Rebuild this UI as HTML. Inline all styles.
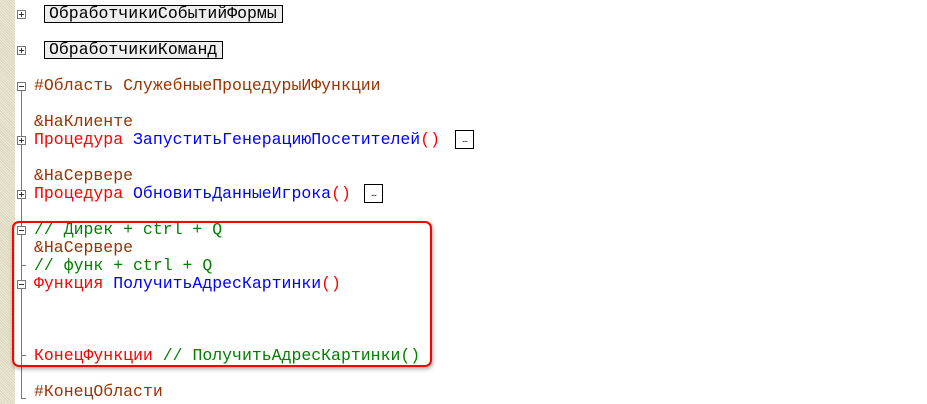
<!DOCTYPE html>
<html><head><meta charset="utf-8"><style>
body{margin:0;width:927px;height:404px;background:#fff;position:relative;overflow:hidden;font-family:"Liberation Mono","Courier New",monospace;font-size:16.5px}
.g{position:absolute;left:0;top:0;width:15px;height:404px;background:repeating-linear-gradient(45deg,#ece8d8 0 1px,#dcd6bc 1px 2px)}
.l{position:absolute;left:34px;height:18px;line-height:18px;white-space:pre;letter-spacing:0}
.br{color:#993300}.r{color:#f00}.b{color:#00f}.gr{color:#008000}.k{color:#000}
.box{position:absolute;border:1px solid #000;background:#eee;height:16px;line-height:16px;padding:0 5px 0 4px;white-space:pre}
.pm{position:absolute;left:17px;width:9px;height:9px;border:1px solid #777;background:#fff;box-sizing:border-box}
.pm:before{content:"";position:absolute;left:1px;top:3px;width:5px;height:1px;background:#333}
.p:after{content:"";position:absolute;left:3px;top:1px;width:1px;height:5px;background:#333}
.vl{position:absolute;left:21px;width:1px;background:#777}
.hl{position:absolute;left:21px;width:5px;height:1px;background:#777}
.el{position:absolute;width:17px;height:17px;border:1px solid #000;font-family:"Liberation Sans",sans-serif;font-size:10px;line-height:18px;text-align:center;background:#fff;letter-spacing:-1px}
</style></head><body>
<div class="g"></div>
<div class="pm p" style="top:10px"></div>
<div class="box" style="left:44px;top:5px">ОбработчикиСобытийФормы</div>
<div class="pm p" style="top:46px"></div>
<div class="box" style="left:44px;top:41px">ОбработчикиКоманд</div>
<div class="vl" style="top:91px;height:307px"></div>
<div class="pm" style="top:82px"></div>
<div class="l br" style="top:77px">#Область СлужебныеПроцедурыИФункции</div>
<div class="l br" style="top:113px">&amp;НаКлиенте</div>
<div class="pm p" style="top:136px"></div>
<div class="l" style="top:131px"><span class="r">Процедура</span> <span class="b">ЗапуститьГенерациюПосетителей</span><span class="r">()</span></div>
<div class="el" style="left:455px;top:130px">...</div>
<div class="l br" style="top:167px">&amp;НаСервере</div>
<div class="pm p" style="top:190px"></div>
<div class="l" style="top:185px"><span class="r">Процедура</span> <span class="b">ОбновитьДанныеИгрока</span><span class="r">()</span></div>
<div class="el" style="left:364px;top:184px">...</div>
<div class="pm" style="top:226px"></div>
<div class="l gr" style="top:221px">// Дирек + ctrl + Q</div>
<div class="l br" style="top:239px">&amp;НаСервере</div>
<div class="hl" style="top:265px"></div>
<div class="l gr" style="top:257px">// функ + ctrl + Q</div>
<div class="pm" style="top:280px"></div>
<div class="l" style="top:275px"><span class="r">Функция</span> <span class="b">ПолучитьАдресКартинки</span><span class="r">()</span></div>
<div class="hl" style="top:355px"></div>
<div class="l" style="top:347px"><span class="r">КонецФункции</span> <span class="gr">// ПолучитьАдресКартинки()</span></div>
<div class="hl" style="top:398px"></div>
<div class="l br" style="top:383px">#КонецОбласти</div>
<div style="position:absolute;left:12px;top:221px;width:416px;height:142px;border:2px solid #f00;border-radius:7px;box-shadow:1px 2px 4px rgba(0,0,0,.35)"></div>
</body></html>
